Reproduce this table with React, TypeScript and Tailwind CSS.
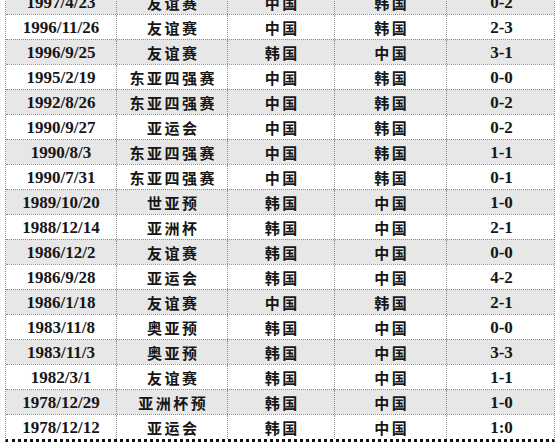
const rows: [string, string, string, string, string][] = [
  ['1997/4/23', '友谊赛', '中国', '韩国', '0-2'],
  ['1996/11/26', '友谊赛', '中国', '韩国', '2-3'],
  ['1996/9/25', '友谊赛', '韩国', '中国', '3-1'],
  ['1995/2/19', '东亚四强赛', '中国', '韩国', '0-0'],
  ['1992/8/26', '东亚四强赛', '中国', '韩国', '0-2'],
  ['1990/9/27', '亚运会', '中国', '韩国', '0-2'],
  ['1990/8/3', '东亚四强赛', '中国', '韩国', '1-1'],
  ['1990/7/31', '东亚四强赛', '中国', '韩国', '0-1'],
  ['1989/10/20', '世亚预', '韩国', '中国', '1-0'],
  ['1988/12/14', '亚洲杯', '韩国', '中国', '2-1'],
  ['1986/12/2', '友谊赛', '韩国', '中国', '0-0'],
  ['1986/9/28', '亚运会', '韩国', '中国', '4-2'],
  ['1986/1/18', '友谊赛', '中国', '韩国', '2-1'],
  ['1983/11/8', '奥亚预', '韩国', '中国', '0-0'],
  ['1983/11/3', '奥亚预', '韩国', '中国', '3-3'],
  ['1982/3/1', '友谊赛', '韩国', '中国', '1-1'],
  ['1978/12/29', '亚洲杯预', '韩国', '中国', '1-0'],
  ['1978/12/12', '亚运会', '韩国', '中国', '1:0'],
]

const num = "font-['Liberation_Serif','Times_New_Roman',serif] text-[17px]"
const cjk = "font-['Noto_Sans_CJK_SC','Noto_Sans_CJK_JP',sans-serif] text-[15px] tracking-[2.5px] pl-[2.5px]"

export default function App() {
  return (
    <div className="w-[560px] h-[442px] overflow-hidden bg-white">
      <div className="ml-[5px] mt-[-11px] w-[550px] border-x border-dotted border-[#8a8a8a] border-b-[3px] border-b-solid border-b-[#111]">
        {rows.map(([date, type, home, away, score], i) => (
          <div
            key={date}
            className={`grid grid-cols-[110px_111px_107px_112px_110px] h-[25px] border-t border-dotted border-[#8f8f8f] font-bold text-[#161616] leading-none ${
              i % 2 === 0 ? 'bg-[#e7e7e7]' : 'bg-white'
            }`}
          >
            <div className={`flex items-center justify-center ${num}`}>{date}</div>
            <div className={`flex items-center justify-center border-l border-dotted border-[#8f8f8f] ${cjk}`}>{type}</div>
            <div className={`flex items-center justify-center border-l border-dotted border-[#8f8f8f] ${cjk}`}>{home}</div>
            <div className={`flex items-center justify-center border-l border-dotted border-[#8f8f8f] ${cjk}`}>{away}</div>
            <div className={`flex items-center justify-center border-l border-dotted border-[#8f8f8f] ${num}`}>{score}</div>
          </div>
        ))}
      </div>
    </div>
  )
}
